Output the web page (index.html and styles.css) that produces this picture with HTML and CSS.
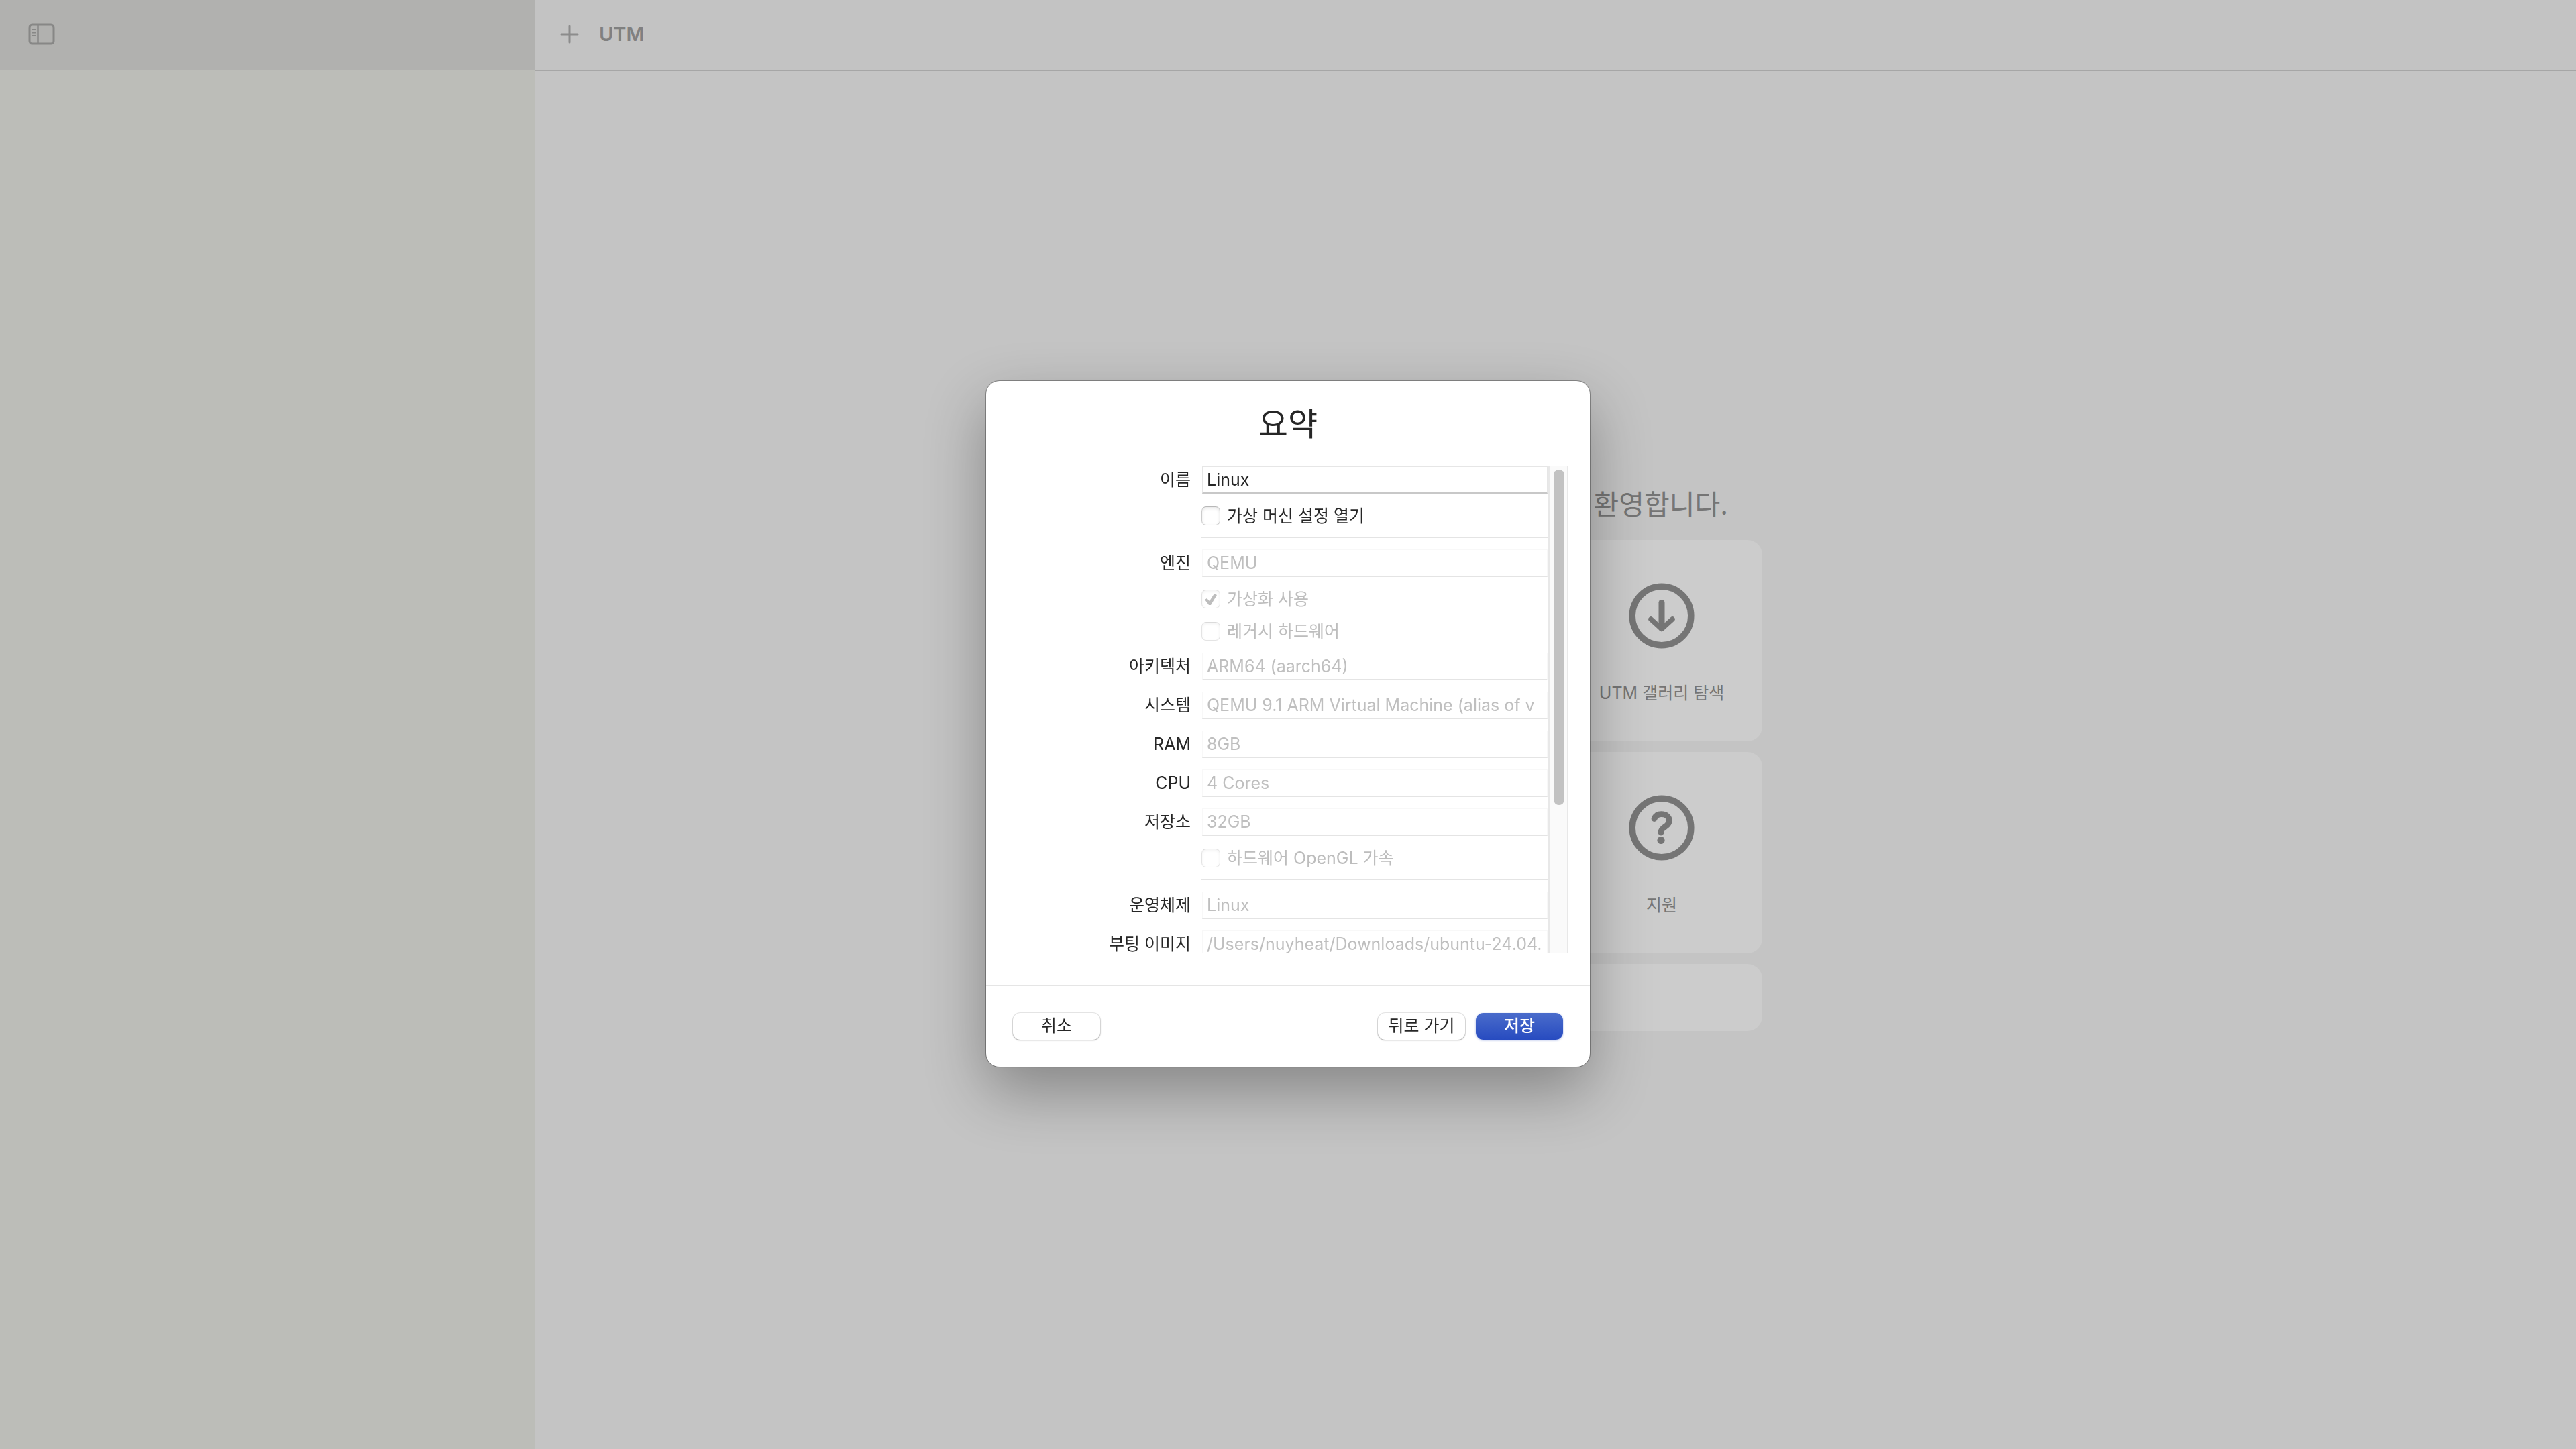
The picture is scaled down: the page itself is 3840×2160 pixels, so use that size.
FILE: index.html
```html
<!DOCTYPE html>
<html lang="ko">
<head>
<meta charset="utf-8">
<title>UTM</title>
<link rel="stylesheet" href="styles.css">
</head>
<body>
<div class="window">
  <aside class="sidebar">
    <header class="sidebar-bar">
      <button class="icon-button" type="button">
        <svg width="40" height="32" viewBox="0 0 40 32" fill="none" stroke="currentColor">
          <rect x="2" y="2" width="36" height="28" rx="4" stroke-width="3"/>
          <path d="M14.500 2v28" stroke-width="2.500"/>
          <path d="M6 9h4.500M6 13.500h4.500M6 18h4.500" stroke-width="2" stroke-linecap="round"/>
        </svg>
      </button>
    </header>
  </aside>
  <main class="main">
    <header class="toolbar">
      <button class="icon-button" type="button">
        <svg width="28" height="28" viewBox="0 0 28 28" fill="none" stroke="currentColor" stroke-width="3" stroke-linecap="round">
          <path d="M14 2v24M2 14h24"/>
        </svg>
      </button>
      <h1 class="app-title">UTM</h1>
    </header>
    <section class="welcome">
      <h2 class="welcome-title">환영합니다.</h2>
      <div class="cards">
        <button class="card" type="button">
          <svg class="card-icon" viewBox="0 0 98 98" fill="none" stroke="currentColor" stroke-linecap="round" stroke-linejoin="round">
            <circle cx="49" cy="49" r="43.800" stroke-width="9.500"/>
            <path d="M49 29.500v38" stroke-width="9"/>
            <path d="M33 54l16 14.500 16-14.500" stroke-width="7.500"/>
          </svg>
          <span>UTM 갤러리 탐색</span>
        </button>
        <button class="card" type="button">
          <svg class="card-icon" viewBox="0 0 98 98" fill="none" stroke="currentColor" stroke-linecap="round" stroke-linejoin="round">
            <circle cx="49" cy="49" r="43.800" stroke-width="9.500"/>
            <path d="M38 35.500c2-4.500 5.500-6.800 10.500-6.800 7 0 11.800 3.800 11.800 9.600 0 4.200-2.300 6.700-6.300 9.200-4 2.600-6 4.500-6 7.800v.7" stroke-width="8.800"/>
            <circle cx="48" cy="67.500" r="5.600" fill="currentColor" stroke="none"/>
          </svg>
          <span>지원</span>
        </button>
        <div class="card-wide"></div>
      </div>
    </section>
  </main>
</div>

<div class="overlay">
  <form class="sheet">
    <h2 class="sheet-title">요약</h2>
    <div class="scroller">
      <div class="fields">
        <label class="label" for="name">이름</label>
        <input class="field" id="name" type="text" value="Linux">
        <label class="check"><input type="checkbox">가상 머신 설정 열기</label>
        <hr class="rule">
        <label class="label" for="engine">엔진</label>
        <input class="field" id="engine" type="text" value="QEMU" disabled>
        <label class="check check-off"><input type="checkbox" checked disabled>가상화 사용</label>
        <label class="check check-off"><input type="checkbox" disabled>레거시 하드웨어</label>
        <label class="label" for="arch">아키텍처</label>
        <input class="field" id="arch" type="text" value="ARM64 (aarch64)" disabled>
        <label class="label" for="system">시스템</label>
        <input class="field" id="system" type="text" value="QEMU 9.1 ARM Virtual Machine (alias of v" disabled>
        <label class="label" for="ram">RAM</label>
        <input class="field" id="ram" type="text" value="8GB" disabled>
        <label class="label" for="cpu">CPU</label>
        <input class="field" id="cpu" type="text" value="4 Cores" disabled>
        <label class="label" for="storage">저장소</label>
        <input class="field" id="storage" type="text" value="32GB" disabled>
        <label class="check check-off"><input type="checkbox" disabled>하드웨어 OpenGL 가속</label>
        <hr class="rule">
        <label class="label" for="os">운영체제</label>
        <input class="field" id="os" type="text" value="Linux" disabled>
        <label class="label" for="boot">부팅 이미지</label>
        <input class="field" id="boot" type="text" value="/Users/nuyheat/Downloads/ubuntu-24.04." disabled>
      </div>
      <div class="track"><div class="thumb"></div></div>
    </div>
    <footer class="actions">
      <button class="button" type="button">취소</button>
      <button class="button button-back" type="button">뒤로 가기</button>
      <button class="button button-primary" type="submit">저장</button>
    </footer>
  </form>
</div>
</body>
</html>
```
FILE: styles.css
```css
* {
  box-sizing: border-box;
}

body {
  margin: 0;
  background: #c4c4c4;
  color: #262626;
  font: 25px/32px Inter, "Noto Sans CJK KR", sans-serif;
}

button,
input {
  margin: 0;
  font: inherit;
  color: inherit;
}

h1,
h2 {
  margin: 0;
}

.window {
  display: flex;
  min-height: 100vh;
}

.sidebar {
  flex: 0 0 798px;
  border-right: 1px solid #b4b4b2;
  background: #bcbdb8;
}

.sidebar-bar {
  display: flex;
  align-items: center;
  height: 104px;
  padding: 0 42px 2px;
  background: #b1b1af;
  color: #878786;
}

.icon-button {
  display: flex;
  padding: 0;
  border: 0;
  background: none;
}

.main {
  flex: 1;
  display: flex;
  flex-direction: column;
}

.toolbar {
  display: flex;
  align-items: center;
  gap: 30px;
  height: 106px;
  padding: 0 37px 2px;
  border-bottom: 2px solid #a6a6a6;
  background: #c3c3c3;
  color: #8c8c8c;
}

.app-title {
  color: #808080;
  font-size: 29px;
  font-weight: 600;
}

.welcome {
  flex: 1;
  display: flex;
  flex-direction: column;
  align-items: center;
  justify-content: center;
  gap: 28px;
  padding-bottom: 2px;
  color: #757575;
}

.welcome-title {
  width: 616px;
  padding-right: 51px;
  font-size: 41px;
  font-weight: 400;
  line-height: 50px;
  text-align: right;
}

.cards {
  display: grid;
  grid-template-columns: 300px 300px;
  gap: 16px;
}

.card {
  grid-column: 2;
  display: flex;
  flex-direction: column;
  align-items: center;
  gap: 50px;
  height: 300px;
  padding: 64px 0 0;
  border: 0;
  border-radius: 22px;
  background: #cccccc;
}

.card-icon {
  width: 98px;
  height: 98px;
}

.card-wide {
  grid-column: 1 / 3;
  height: 100px;
  border-radius: 22px;
  background: #cccccc;
}

.overlay {
  position: fixed;
  inset: 0;
  display: grid;
  place-items: center;
  padding-bottom: 2px;
}

.sheet {
  width: 900px;
  border-radius: 20px;
  background: #ffffff;
  box-shadow: 0 0 1px 1px rgba(0, 0, 0, 0.35), 0 36px 90px rgba(0, 0, 0, 0.32);
}

.sheet-title {
  padding: 32px 0 30px;
  font-size: 48px;
  font-weight: 400;
  line-height: 64px;
  text-align: center;
}

.scroller {
  display: flex;
  height: 726px;
  margin: 0 32px 48px;
  overflow: hidden;
}

.fields {
  flex: 1;
  display: grid;
  grid-template-columns: 273px minmax(0, 1fr);
  align-content: start;
  gap: 16px;
}

.label {
  padding-top: 5px;
  text-align: right;
}

.field {
  width: auto;
  min-width: 0;
  height: 41px;
  margin: 1px 1px 0;
  padding: 0 0 0 6px;
  border: 1px solid #e6e6e6;
  border-bottom: 2px solid #c8c8c8;
  background: #ffffff;
}

.field:disabled {
  border-color: #f8f8f8;
  border-bottom-color: #e4e4e4;
  color: #bfbfbf;
}

.check {
  grid-column: 2;
  display: flex;
  align-items: center;
  gap: 10px;
  height: 32px;
  padding-top: 2px;
}

.check input {
  appearance: none;
  display: grid;
  place-items: center;
  width: 28px;
  height: 28px;
  border: 1px solid #cccccc;
  border-top-color: #b8b8b8;
  border-radius: 7px;
  background: #ffffff;
  box-shadow: inset 0 2px 4px rgba(0, 0, 0, 0.1);
}

.check input:disabled {
  border-color: #e4e4e4;
  border-top-color: #dadada;
  box-shadow: inset 0 2px 4px rgba(0, 0, 0, 0.05);
}

.check input:checked::before {
  content: "";
  width: 20px;
  height: 20px;
  background: #bdbdbd;
  clip-path: polygon(1px 11px, 4px 9px, 8px 13px, 15px 2px, 19px 4px, 10px 19px, 7px 19px);
}

.check-off {
  color: #bdbdbd;
}

.rule {
  grid-column: 2;
  width: 100%;
  height: 2px;
  margin: 0;
  border: 0;
  background: #e4e4e4;
}

.track {
  width: 30px;
  padding: 6px;
  border: solid #e8e8e8;
  border-width: 0 2px;
  background: #fafafa;
}

.thumb {
  width: 16px;
  height: 500px;
  margin: 0 auto;
  border-radius: 8px;
  background: #c2c2c2;
}

.actions {
  display: flex;
  gap: 16px;
  padding: 40px;
  border-top: 2px solid #e5e5e5;
}

.button {
  width: 130px;
  height: 40px;
  padding: 0 0 2px;
  border: 0;
  border-radius: 11px;
  background: #ffffff;
  box-shadow: 0 0 1px 1px rgba(0, 0, 0, 0.1), 0 1px 2px rgba(0, 0, 0, 0.3);
  line-height: 36px;
}

.button-back {
  margin-left: auto;
}

.button-primary {
  background: linear-gradient(#4a6ccb, #274bc0);
  box-shadow: 0 1px 3px rgba(39, 75, 192, 0.4);
  color: #ffffff;
  font-weight: 500;
}
```
